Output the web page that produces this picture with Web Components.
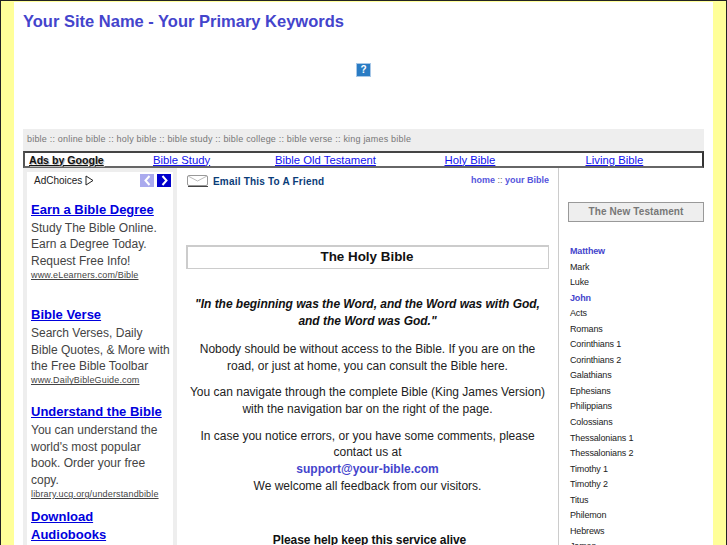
<!DOCTYPE html>
<html>
<head>
<meta charset="utf-8">
<title>Your Site Name</title>
<style>
  html, body { margin: 0; height: 545px; overflow: hidden; }
  body { background: #ffff99; font-family: "Liberation Sans", Arial, sans-serif; }
</style>
</head>
<body>
<bible-page></bible-page>
<script>
const BOOKS = [
  ['Matthew', true], ['Mark'], ['Luke'], ['John', true], ['Acts'], ['Romans'],
  ['Corinthians 1'], ['Corinthians 2'], ['Galathians'], ['Ephesians'], ['Philippians'],
  ['Colossians'], ['Thessalonians 1'], ['Thessalonians 2'], ['Timothy 1'], ['Timothy 2'],
  ['Titus'], ['Philemon'], ['Hebrews'], ['James']
];

const ADS = [
  { title: 'Earn a Bible Degree', body: ['Study The Bible Online.', 'Earn a Degree Today.', 'Request Free Info!'], url: 'www.eLearners.com/Bible', gap: 24 },
  { title: 'Bible Verse', body: ['Search Verses, Daily', 'Bible Quotes, &amp; More with', 'the Free Bible Toolbar'], url: 'www.DailyBibleGuide.com', gap: 16 },
  { title: 'Understand the Bible', body: ['You can understand the', "world's most popular", 'book. Order your free', 'copy.'], url: 'library.ucg.org/understandbible', gap: 7 },
  { title: 'Download<br>Audiobooks', body: [], url: '', gap: 0 }
];

class AdColumn extends HTMLElement {
  constructor() {
    super();
    this.attachShadow({ mode: 'open' });
  }

  connectedCallback() {
    const ads = ADS.map(ad => `
      <div class="ad" style="margin-bottom:${ad.gap}px">
        <a class="title" href="#">${ad.title}</a>
        ${ad.body.map(line => `<div class="line">${line}</div>`).join('')}
        ${ad.url ? `<a class="url" href="#">${ad.url}</a>` : ''}
      </div>`).join('');
    this.shadowRoot.innerHTML = `
      <style>
        :host { display: block; width: 154px; box-sizing: border-box; background: #eeeeee; padding: 4px 4px 0 4px; flex: none; }
        .inner { background: #fff; height: 374px; overflow: hidden; box-sizing: border-box; padding: 0 0 0 4px; }
        .choices { display: flex; align-items: center; height: 17px; font-size: 10px; color: #222; padding-left: 3px; }
        .choices svg { margin-left: 3px; }
        .arrow { width: 14px; height: 13px; display: flex; align-items: center; justify-content: center; margin-left: 3px; }
        .arrow svg { margin: 0; }
        .arrow.prev { background: #aaaaee; margin-left: auto; }
        .arrow.next { background: #0000cc; margin-right: 2px; }
        .ads { margin-top: 12px; }
        .title { display: block; font-size: 13px; font-weight: bold; line-height: 18px; margin-bottom: 1px; color: #0000dd; text-decoration: underline; }
        .line { font-size: 12px; line-height: 16.4px; color: #444; }
        .url { display: block; font-size: 9px; line-height: 13px; color: #444; text-decoration: underline; letter-spacing: .15px; }
      </style>
      <div class="inner">
        <div class="choices">AdChoices
          <svg width="9" height="11" viewBox="0 0 9 11"><path d="M1 1v9l7-4.500z" fill="none" stroke="#222"/></svg>
          <span class="arrow prev"><svg width="7" height="11" viewBox="0 0 7 11"><path d="M5.500 1L1.500 5.500l4 4.500" fill="none" stroke="#fff" stroke-width="2"/></svg></span>
          <span class="arrow next"><svg width="7" height="11" viewBox="0 0 7 11"><path d="M1.500 1l4 4.500-4 4.500" fill="none" stroke="#fff" stroke-width="2"/></svg></span>
        </div>
        <div class="ads">${ads}</div>
      </div>`;
  }
}

class AdBar extends HTMLElement {
  constructor() {
    super();
    this.attachShadow({ mode: 'open' });
  }

  connectedCallback() {
    this.shadowRoot.innerHTML = `
      <style>
        :host { display: grid; grid-template-columns: 124px 122px 169.5px 141px 1fr; align-items: center; box-sizing: border-box; height: 17px; border: 2px solid; border-color: #444 #333 #666 #555; font-size: 11.3px; padding-left: 4px; }
        b { font-size: 10.6px; color: #111; text-decoration: underline; text-shadow: 1px 1px 0 #bbb; }
        a { color: #1111ee; text-decoration: underline; }
      </style>
      <b>Ads by Google</b>
      <a href="#">Bible Study</a>
      <a href="#">Bible Old Testament</a>
      <a href="#">Holy Bible</a>
      <a href="#">Living Bible</a>`;
  }
}

class MainContent extends HTMLElement {
  constructor() {
    super();
    this.attachShadow({ mode: 'open' });
  }

  connectedCallback() {
    this.shadowRoot.innerHTML = `
      <style>
        :host { display: block; width: 382px; flex: none; box-sizing: border-box; padding: 0 9px 0 9px; border-right: 1px solid #ccc; height: 377px; overflow: hidden; font-size: 12px; color: #222; }
        .top { display: flex; align-items: center; height: 26px; margin-left: 1px; }
        .email { font-size: 10px; font-weight: bold; color: #0a3c78; margin-left: 5px; letter-spacing: .2px; }
        .crumb { margin: -3px 0 0 auto; font-size: 9px; font-weight: bold; color: #5555dd; }
        .crumb span { color: #666; font-weight: normal; }
        h1 { margin: 51px 0 0; box-sizing: border-box; height: 24px; line-height: 19px; padding-right: 2px; border: solid #ccc; border-width: 2px 1px 1px 2px; font-size: 13.4px; color: #111; text-align: center; }
        p { margin: 0 0 9.5px; text-align: center; line-height: 17px; }
        p.tight { line-height: 16.7px; }
        .quote { margin-top: 27px; margin-bottom: 10.5px; font-weight: bold; font-style: italic; color: #111; letter-spacing: -.03px; }
        a { color: #4444cc; font-weight: bold; text-decoration: none; }
        .keep { margin-top: 38px; padding-left: 4px; font-weight: bold; color: #111; letter-spacing: -.08px; }
      </style>
      <div class="top">
        <svg width="21" height="12" viewBox="0 0 21 12"><rect x=".5" y=".5" width="20" height="10" rx="1.500" fill="#fff" stroke="#999"/><path d="M1 1l9.500 5L20 1" fill="none" stroke="#bbb"/><path d="M1 11.500h20" stroke="#444"/></svg>
        <span class="email">Email This To A Friend</span>
        <span class="crumb">home <span>::</span> your Bible</span>
      </div>
      <h1>The Holy Bible</h1>
      <p class="quote">"In the beginning was the Word, and the Word was with God,<br>and the Word was God."</p>
      <p>Nobody should be without access to the Bible. If you are on the<br>road, or just at home, you can consult the Bible here.</p>
      <p>You can navigate through the complete Bible (King James Version)<br>with the navigation bar on the right of the page.</p>
      <p class="tight">In case you notice errors, or you have some comments, please<br>contact us at<br><a href="#">support@your-bible.com</a><br>We welcome all feedback from our visitors.</p>
      <p class="keep">Please help keep this service alive</p>`;
  }
}

class BookNav extends HTMLElement {
  constructor() {
    super();
    this.attachShadow({ mode: 'open' });
  }

  connectedCallback() {
    const items = BOOKS.map(([name, hi]) => `<div class="${hi ? 'hi' : ''}">${name}</div>`).join('');
    this.shadowRoot.innerHTML = `
      <style>
        :host { display: block; flex: 1; min-width: 0; height: 377px; overflow: hidden; box-sizing: border-box; padding: 34px 0 0 9px; font-size: 9px; color: #222; }
        h2 { margin: 0 0 22px; height: 20px; box-sizing: border-box; border: 1px solid #999; background: #eee; font-size: 10px; color: #777; text-align: center; letter-spacing: .1px; line-height: 18px; }
        .list { padding-left: 2px; letter-spacing: -.15px; }
        .list div { height: 15.55px; line-height: 15.55px; }
        .hi { color: #4444cc; font-weight: bold; }
      </style>
      <h2>The New Testament</h2>
      <div class="list">${items}</div>`;
  }
}

class BiblePage extends HTMLElement {
  constructor() {
    super();
    this.attachShadow({ mode: 'open' });
  }

  connectedCallback() {
    this.shadowRoot.innerHTML = `
      <style>
        :host { display: block; box-sizing: border-box; height: 545px; border: solid #222; border-width: 1px 1px 0 1px; padding: 1px 13px 0 13px; }
        .sheet { background: #fff; height: 100%; box-sizing: border-box; padding: 0 9px; overflow: hidden; }
        .head { height: 127px; }
        h1 { margin: 0; padding-top: 9px; font-size: 16.5px; line-height: 21px; color: #4444cc; }
        .q { display: block; width: 15px; height: 14px; margin: 31px 0 0 333px; box-sizing: border-box; background: #2a7cc4; border: 1px solid #a8c8e8; color: #fff; font-size: 10px; font-weight: bold; line-height: 12px; text-align: center; }
        .keys { height: 22px; line-height: 20px; background: #eee; color: #777; font-size: 9px; padding-left: 4px; letter-spacing: .2px; }
        .cols { display: flex; }
      </style>
      <div class="sheet">
        <div class="head">
          <h1>Your Site Name - Your Primary Keywords</h1>
          <span class="q">?</span>
        </div>
        <div class="keys">bible :: online bible :: holy bible :: bible study :: bible college :: bible verse :: king james bible</div>
        <ad-bar></ad-bar>
        <div class="cols">
          <ad-column></ad-column>
          <main-content></main-content>
          <book-nav></book-nav>
        </div>
      </div>`;
  }
}

customElements.define('ad-column', AdColumn);
customElements.define('ad-bar', AdBar);
customElements.define('main-content', MainContent);
customElements.define('book-nav', BookNav);
customElements.define('bible-page', BiblePage);
</script>
</body>
</html>
